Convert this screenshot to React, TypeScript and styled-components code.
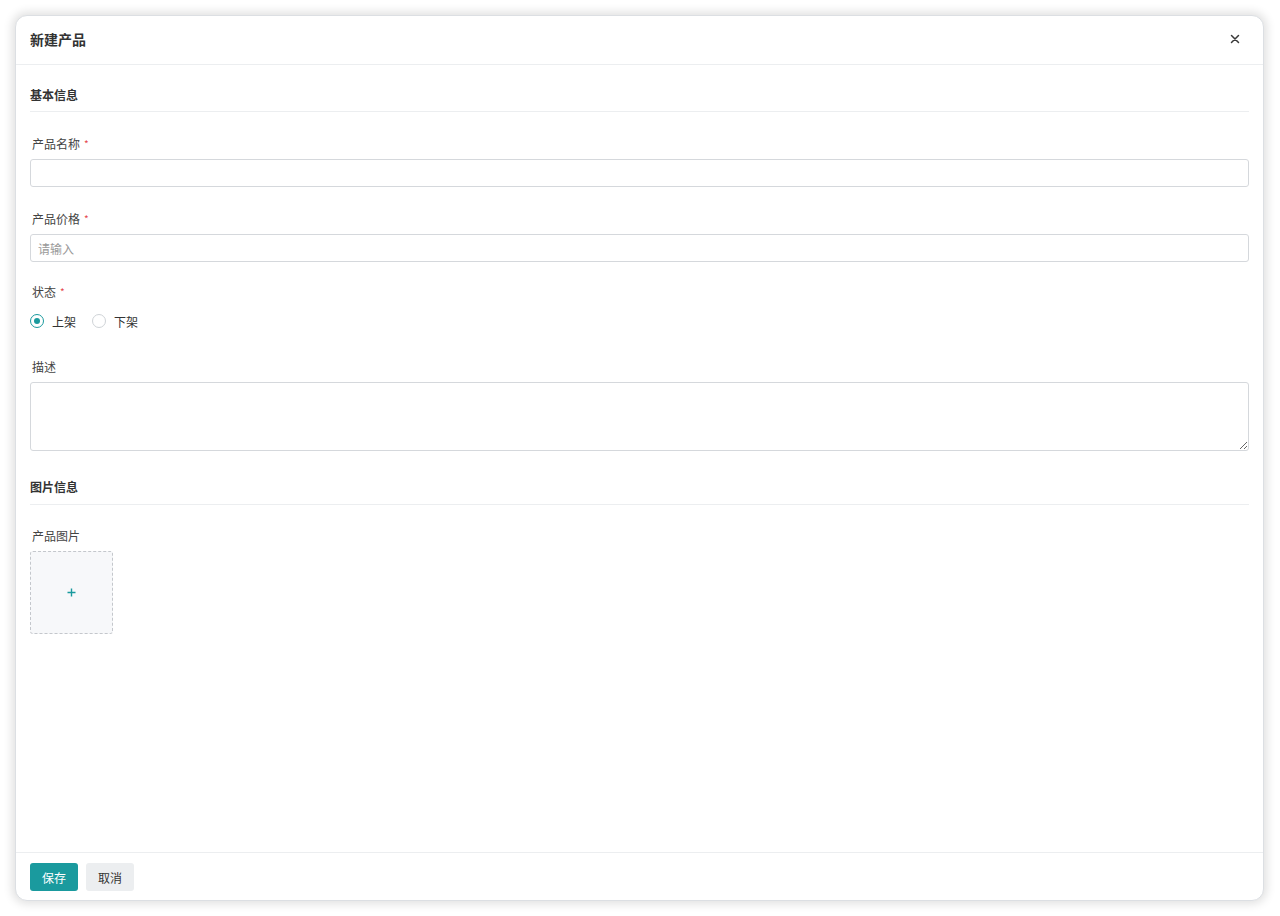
import styled, { createGlobalStyle } from 'styled-components';

const GlobalStyle = createGlobalStyle`
    html, body {
        margin: 0;
        padding: 0;
        background: #ffffff;
    }
    body {
        font-family: 'Noto Sans CJK SC', 'Noto Sans', sans-serif;
        font-size: 12px;
        color: #333;
    }
    * {
        box-sizing: border-box;
    }
`;

const TEAL = '#1a9a9e';

const App = () => {
    return (
        <>
            <GlobalStyle />
            <StyledPage>
                <StyledDialog>
                    <StyledHeader>
                        <StyledTitle>新建产品</StyledTitle>
                        <StyledClose aria-label="close">
                            <svg width="10" height="10" viewBox="0 0 10 10">
                                <path d="M1.5 1.5 L8.5 8.5 M8.5 1.5 L1.5 8.5" stroke="#3a3a3a" strokeWidth="1.5" strokeLinecap="round" />
                            </svg>
                        </StyledClose>
                    </StyledHeader>

                    <StyledBody>
                        <StyledSection>基本信息</StyledSection>

                        <StyledField>
                            <StyledLabel>
                                产品名称<StyledRequired>*</StyledRequired>
                            </StyledLabel>
                            <StyledInput />
                        </StyledField>

                        <StyledField>
                            <StyledLabel>
                                产品价格<StyledRequired>*</StyledRequired>
                            </StyledLabel>
                            <StyledInput placeholder="请输入" />
                        </StyledField>

                        <StyledField>
                            <StyledLabel compact>
                                状态<StyledRequired>*</StyledRequired>
                            </StyledLabel>
                            <StyledRadioGroup>
                                <StyledRadio>
                                    <StyledDot checked />
                                    上架
                                </StyledRadio>
                                <StyledRadio>
                                    <StyledDot />
                                    下架
                                </StyledRadio>
                            </StyledRadioGroup>
                        </StyledField>

                        <StyledField>
                            <StyledLabel>描述</StyledLabel>
                            <StyledTextarea />
                        </StyledField>

                        <StyledSection next>图片信息</StyledSection>

                        <StyledField>
                            <StyledLabel>产品图片</StyledLabel>
                            <StyledUpload>
                                <svg width="9" height="9" viewBox="0 0 9 9">
                                    <path d="M4.5 0.5 V8.5 M0.5 4.5 H8.5" stroke={TEAL} strokeWidth="1.4" />
                                </svg>
                            </StyledUpload>
                        </StyledField>
                    </StyledBody>

                    <StyledFooter>
                        <StyledButton primary>保存</StyledButton>
                        <StyledButton>取消</StyledButton>
                    </StyledFooter>
                </StyledDialog>
            </StyledPage>
        </>
    );
};

export default App;

const StyledPage = styled.div`
    height: 916px;
    padding: 15px 16px 15px 15px;
    display: flex;
`;

const StyledDialog = styled.div`
    flex: 1;
    display: flex;
    flex-direction: column;
    background: #fff;
    border: 1px solid #dcdfe3;
    border-radius: 12px;
    box-shadow: 0 0 10px 3px rgba(0, 0, 0, 0.12);
    overflow: hidden;
`;

const StyledHeader = styled.div`
    height: 49px;
    flex-shrink: 0;
    display: flex;
    align-items: center;
    justify-content: space-between;
    padding: 0 14px 2px;
    border-bottom: 1px solid #eceef0;
`;

const StyledTitle = styled.div`
    font-size: 14px;
    font-weight: 600;
    color: #333;
`;

const StyledClose = styled.button`
    width: 20px;
    height: 20px;
    margin-right: 4px;
    border: none;
    background: none;
    padding: 0;
    display: flex;
    align-items: center;
    justify-content: center;
    cursor: pointer;
`;

const StyledBody = styled.div`
    flex: 1;
    padding: 20px 14px 0;
`;

const StyledSection = styled.div<{ next?: boolean }>`
    font-size: 12px;
    font-weight: 600;
    line-height: 20px;
    color: #333;
    padding-bottom: ${(p) => (p.next ? '7px' : '6px')};
    border-bottom: 1px solid #eceef0;
    margin-top: ${(p) => (p.next ? '26px' : '0')};
    margin-bottom: ${(p) => (p.next ? '22px' : '23px')};
`;

const StyledField = styled.div`
    margin-bottom: 23px;
`;

const StyledLabel = styled.div<{ compact?: boolean }>`
    line-height: 18px;
    padding-left: 2px;
    color: #444;
    margin-top: ${(p) => (p.compact ? '-2px' : '0')};
    margin-bottom: ${(p) => (p.compact ? '8px' : '6px')};
`;

const StyledRequired = styled.span`
    color: #e5484d;
    font-size: 10px;
    margin-left: 4px;
    vertical-align: top;
`;

const StyledInput = styled.input`
    display: block;
    width: 100%;
    height: 28px;
    border: 1px solid #d5d8dc;
    border-radius: 3px;
    padding: 0 7px;
    font-family: inherit;
    font-size: 12px;
    color: #333;
    outline: none;
    &::placeholder {
        color: #999;
    }
`;

const StyledTextarea = styled.textarea`
    display: block;
    width: 100%;
    height: 69px;
    border: 1px solid #d5d8dc;
    border-radius: 3px;
    padding: 6px 7px;
    font-family: inherit;
    font-size: 12px;
    outline: none;
    resize: vertical;
`;

const StyledRadioGroup = styled.div`
    display: flex;
    gap: 16px;
    height: 26px;
    padding-bottom: 2px;
    align-items: center;
`;

const StyledRadio = styled.label`
    display: flex;
    align-items: center;
    gap: 8px;
    color: #333;
    font-size: 12px;
`;

const StyledDot = styled.span<{ checked?: boolean }>`
    width: 14px;
    height: 14px;
    border-radius: 50%;
    border: 1px solid ${(p) => (p.checked ? TEAL : '#cfd3d7')};
    display: flex;
    align-items: center;
    justify-content: center;
    &::after {
        content: '';
        width: 6px;
        height: 6px;
        border-radius: 50%;
        background: ${(p) => (p.checked ? TEAL : 'transparent')};
    }
`;

const StyledUpload = styled.div`
    width: 83px;
    height: 83px;
    margin-top: 1px;
    border: 1px dashed #c4c7cc;
    border-radius: 3px;
    background: #f7f8fa;
    display: flex;
    align-items: center;
    justify-content: center;
`;

const StyledFooter = styled.div`
    flex-shrink: 0;
    display: flex;
    gap: 8px;
    padding: 10px 14px 9px;
    border-top: 1px solid #eceef0;
`;

const StyledButton = styled.button<{ primary?: boolean }>`
    height: 28px;
    width: 48px;
    border: none;
    border-radius: 3px;
    font-family: inherit;
    font-size: 12px;
    background: ${(p) => (p.primary ? TEAL : '#eceef0')};
    color: ${(p) => (p.primary ? '#fff' : '#333')};
    cursor: pointer;
`;
